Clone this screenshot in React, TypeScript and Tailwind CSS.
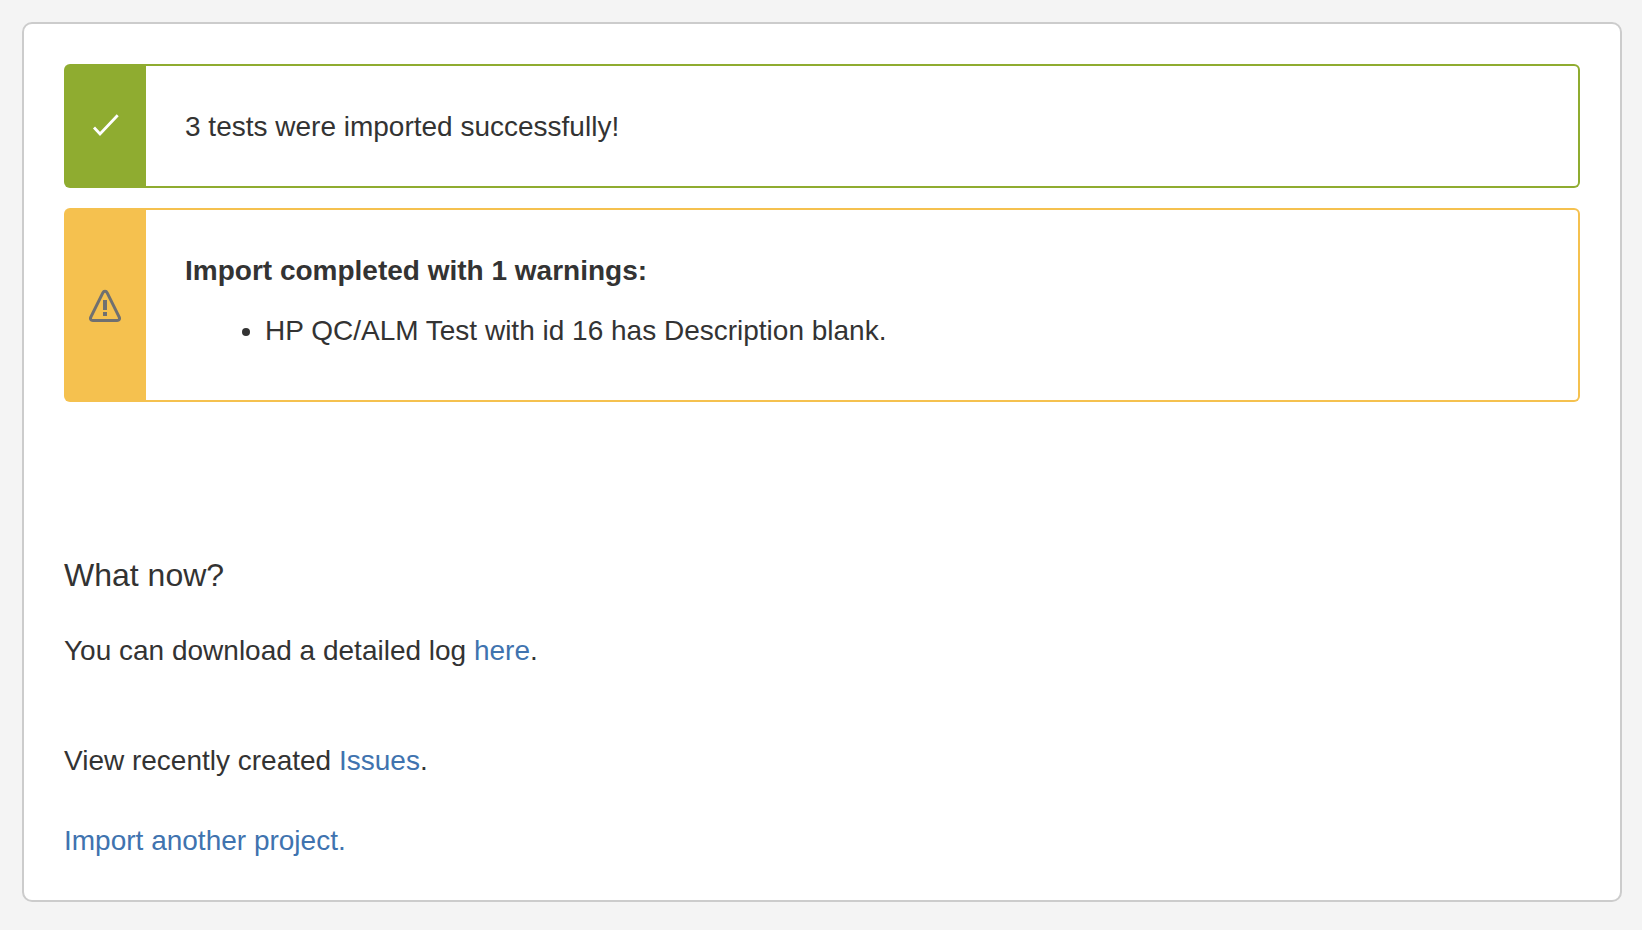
import type { ReactNode } from 'react';

function CheckIcon() {
  return (
    <svg width="32" height="34" viewBox="0 0 32 34" fill="none" aria-hidden="true">
      <path d="M5 18.5l6 6.4L28.7 6.3" stroke="#fff" strokeWidth="2.8" />
    </svg>
  );
}

function WarningIcon() {
  return (
    <svg width="32" height="34" viewBox="0 0 32 34" fill="none" aria-hidden="true">
      <path
        d="M13.8 4.8 1.8 29.1c-.8 1.9 0 3.3 2 3.3h24.4c2 0 2.8-1.4 2-3.3L18.2 4.8c-1-2.1-3.4-2.1-4.4 0z"
        stroke="#707070"
        strokeWidth="3"
      />
      <path d="M14 12h4v10h-4zM14 24h4v4h-4z" fill="#707070" />
    </svg>
  );
}

const tones = {
  success: { border: 'border-[#8fac30]', fill: 'bg-[#8fac30]', icon: <CheckIcon /> },
  warning: { border: 'border-[#f5c14f]', fill: 'bg-[#f5c14f]', icon: <WarningIcon /> },
};

function Message({ tone, children }: { tone: keyof typeof tones; children: ReactNode }) {
  const { border, fill, icon } = tones[tone];

  return (
    <section className="flex">
      <div className={`flex w-[82px] shrink-0 items-center justify-center rounded-l-md ${fill}`}>
        {icon}
      </div>
      <div className={`min-w-0 flex-1 rounded-r-md border-2 border-l-0 pt-10 pr-10 pb-[39px] pl-[39px] ${border}`}>
        {children}
      </div>
    </section>
  );
}

function TextLink({ children }: { children: ReactNode }) {
  return (
    <a href="#" className="text-[#4073af] hover:underline">
      {children}
    </a>
  );
}

export default function App() {
  return (
    <div className="min-h-screen bg-[#f4f4f4] pt-[22px] pr-5 pb-7 pl-[22px] font-['Liberation_Sans',Arial,sans-serif] text-[28px] leading-[41px] text-[#333]">
      <main className="rounded-[10px] border-2 border-[#ccc] bg-white px-10 pt-10 pb-[39px]">
        <div className="space-y-5">
          <Message tone="success">
            <p>3 tests were imported successfully!</p>
          </Message>
          <Message tone="warning">
            <p className="font-bold">Import completed with 1 warnings:</p>
            <ul className="mt-[19px] mb-2.5 list-disc pl-20">
              <li>HP QC/ALM Test with id 16 has Description blank.</li>
            </ul>
          </Message>
        </div>

        {/* Next steps */}
        <h2 className="mt-[153px] text-[32px] leading-10">What now?</h2>
        <p className="mt-[35px]">
          You can download a detailed log <TextLink>here</TextLink>.
        </p>
        <p className="mt-[69px]">
          View recently created <TextLink>Issues</TextLink>.
        </p>
        <p className="mt-[39px]">
          <TextLink>Import another project.</TextLink>
        </p>
      </main>
    </div>
  );
}
